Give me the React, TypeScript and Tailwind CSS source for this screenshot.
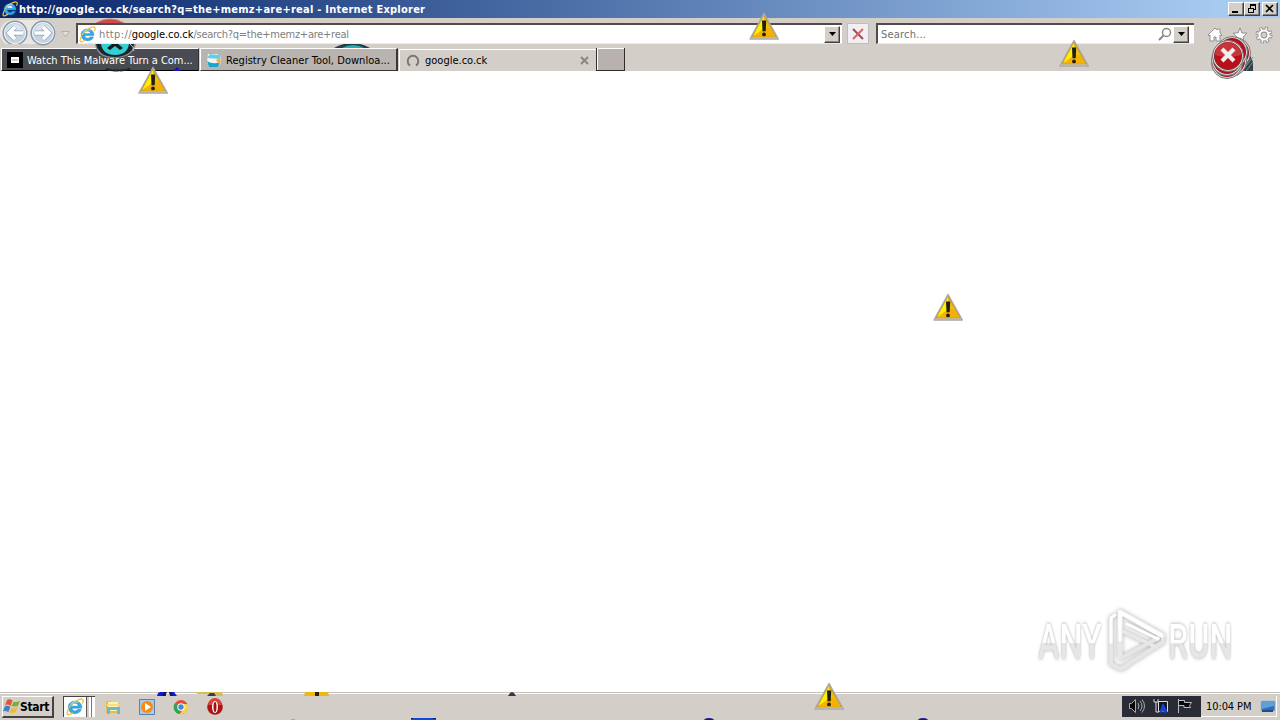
import type { ReactNode } from 'react';
import clsx from 'clsx';

type IconProps = { className?: string };

// Places of the stray warning signs on the desktop
const WARNINGS = [
  'left-[749px] top-[12px]',
  'left-[1059px] top-[39px]',
  'left-[138px] top-[66px]',
  'left-[933px] top-[293px]',
  'left-[814px] top-[682px]',
];

function IeIcon({ className }: IconProps) {
  return (
    <svg viewBox="0 0 16 16" className={className}>
      <path d="M14 9H5.300c.4 2.800 3.800 3.200 5 1.300h3.300C11.900 15.600 2 15.200 2 8.300 2 .800 14.600.800 14 9z" fill="#35a8e6" stroke="#1979bd" strokeWidth=".4" />
      <path d="M5.300 6.800h5.200C10.100 4.200 5.800 4.300 5.300 6.800z" fill="#fff" />
      <path d="M2.500 9.500C.5 13 .5 15.500 3 14.700q2-.7 3-1.700M2.500 8.500C6 3.500 12.500-.2 14.700 1.200c1 .8.400 2.500-.3 3.600" fill="none" stroke="#f2c340" strokeWidth="1.200" />
      <path d="M4 5q3-3 7-1" fill="none" stroke="#9ad9f7" strokeWidth=".8" />
    </svg>
  );
}

function WarningIcon({ className }: IconProps) {
  return (
    <svg viewBox="0 0 30 30" className={className}>
      <path d="M15 1.500 29.300 27h-28.300z" fill="#d0d0d4" stroke="#aaa8ad" strokeWidth="1.500" strokeLinejoin="round" />
      <path d="M15 3.500 27.200 25h-24.200z" fill="#eebf12" stroke="#bd9420" strokeWidth=".8" />
      <path d="M15 4 15 17 4.500 23.500z" fill="#fff000" />
      <path d="M4.500 24.500 15 16l7 0 4 8.500z" fill="#fba900" opacity=".65" />
      <path d="M13 8.500h4.200l-.5 10.800h-3.200z" fill="#201e12" />
      <circle cx="15" cy="22.400" r="1.900" fill="#201e12" />
    </svg>
  );
}

function ErrorIcons() {
  return (
    <svg viewBox="0 0 46 48" className="absolute top-[33px] left-[1208px] h-12 w-[46px]">
      <path d="M29 17 42 22l3 7v9H28z" fill="#344347" />
      <path d="m34 38 11-14M38 38l7-9" stroke="#799396" />
      {[
        [27, 20],
        [23, 28],
        [19, 30],
        [24, 19],
        [19, 27],
        [20, 23],
      ].map(([x, y]) => (
        <g key={`${x}-${y}`}>
          <circle cx={x} cy={y} r="15.500" fill="#dedede" stroke="#777" />
          <circle cx={x} cy={y} r="13.600" fill="#b80f18" stroke="#8c2229" />
        </g>
      ))}
      <path d="M7 22a13 13 0 0 1 26 0q-13 4-26 0" fill="#c8343c" />
      <path d="m14 16 12 12m0-12L14 28" stroke="#f5eeee" strokeWidth="4.200" />
    </svg>
  );
}

function TealError() {
  return (
    <svg viewBox="0 0 44 30" className="absolute top-[44px] left-[94px] h-[30px] w-11">
      <path d="M1 0c1 9 8 14 18 14 11 0 21-3 23-14z" fill="#888b90" />
      <path d="M2 0c2 9 9 13 19 13S39 8 40 0z" fill="#182629" />
      <path d="M7 0c1 7 6 11 14 11S34 7 35 0z" fill="#35cfd2" />
      <path d="m16 6 5-4 5 4 3-2-5-4h-6l-5 4z" fill="#101b1d" />
      <path d="M36 0q4 3 4 7" fill="none" stroke="#c7c0be" />
      <path d="M12 25q9 3 24 0" fill="none" stroke="#202428" strokeWidth="2" strokeDasharray="6 1" />
    </svg>
  );
}

function NavCircle({ flip }: { flip?: boolean }) {
  return (
    <svg viewBox="0 0 26 26" className={clsx('h-[26px] w-[26px]', flip && '-scale-x-100')}>
      <circle cx="13" cy="13" r="11.800" fill="#c6d3df" stroke="#8999a9" strokeWidth="1.500" />
      <circle cx="13" cy="13" r="10.500" fill="none" stroke="#edf4f9" />
      <path d="M4 13a9 9 0 0 1 18 0" fill="#dae4ed" />
      <path d="M21 13H7m6-6-6 6 6 6" stroke="#8fa2b4" strokeWidth="5" fill="none" />
      <path d="M21 13H7m6-6-6 6 6 6" stroke="#fff" strokeWidth="3.700" fill="none" />
    </svg>
  );
}

function DropButton() {
  return (
    <div className="flex h-[17px] w-4 items-center justify-center border border-t-white border-r-[#404040] border-b-[#404040] border-l-white bg-[#d4d0c8] shadow-[inset_-1px_-1px_#888]">
      <svg viewBox="0 0 7 4" className="h-1 w-[7px]"><path d="M0 0h7L3.500 4z" /></svg>
    </div>
  );
}

function WindowButton({ children }: { children: ReactNode }) {
  return (
    <div className="flex h-[14px] w-4 items-center justify-center border border-t-white border-r-[#404040] border-b-[#404040] border-l-white bg-[#d4d0c8] shadow-[inset_-1px_-1px_#808080]">
      <svg viewBox="0 0 12 12" className="h-3 w-3 shrink-0" fill="none" stroke="#000" shapeRendering="crispEdges">{children}</svg>
    </div>
  );
}

function TitleBar() {
  return (
    <div className="flex h-[18px] items-center bg-linear-to-r from-[#0a246a] to-[#a6caf0] to-95% pr-0.5 pl-0.5">
      <IeIcon className="h-4 w-4 shrink-0" />
      <span className="ml-px pt-px text-[11px] font-bold tracking-[0.24px] whitespace-nowrap text-white">
        http://google.co.ck/search?q=the+memz+are+real - Internet Explorer
      </span>
      <div className="ml-auto flex">
        <WindowButton><path d="M2 9h6" strokeWidth="2" /></WindowButton>
        <WindowButton>
          <path d="M4.500 5V1.500h5v5H8M2.500 5.500h5v4h-5zM4 2h6M2 5h6" />
        </WindowButton>
        <div className="ml-0.5">
          <WindowButton><path d="m2 2 7 7m0-7L2 9" strokeWidth="1.700" shapeRendering="auto" /></WindowButton>
        </div>
      </div>
    </div>
  );
}

function Toolbar() {
  return (
    <div className="flex h-[26px] items-start bg-[#d4cec8] pt-[5px]">
      <div className="-mt-[3px] flex gap-0.5 rounded-full bg-[#e9e7e4] pl-0.5">
        <NavCircle />
        <NavCircle flip />
      </div>
      <svg viewBox="0 0 9 6" className="mt-2 ml-[5px] h-1.5 w-[9px]"><path d="M.5.5h8l-4 5z" fill="#e4dfdc" stroke="#b5aeaa" /></svg>
      <div className="relative z-10 ml-[6px] flex h-[21px] w-[766px] items-center border-t-2 border-b border-l-2 border-t-[#514b4b] border-b-[#eee9e6] border-l-[#514b4b] bg-white pr-0.5">
        <IeIcon className="mx-px h-[17px] w-[17px]" />
        <span className="ml-0.5 pt-px text-[11px] tracking-[-0.26px] text-[#808080]">
          <span className="tracking-[0.36px]">http://</span>
          <span className="tracking-[-0.06px] text-black">google.co.ck</span>/search?q=the+memz+are+real
        </span>
        <div className="ml-auto"><DropButton /></div>
      </div>
      <div className="ml-[5px] flex h-[21px] w-[22px] items-center justify-center border border-[#bdbdc7] bg-[#f1eff2]">
        <svg viewBox="0 0 12 12" className="h-3 w-3"><path d="m1 1 10 10" stroke="#a94750" strokeWidth="2" /><path d="M11 1 1 11" stroke="#cf656b" strokeWidth="2" /></svg>
      </div>
      <div className="ml-[7px] flex h-[21px] w-[318px] items-center border-t-2 border-b border-l-2 border-t-[#514b4b] border-b-[#eee9e6] border-l-[#514b4b] bg-white pr-[5px] pl-[3px]">
        <span className="pt-px text-[11px] tracking-[0.2px] text-[#707070]">Search...</span>
        <svg viewBox="0 0 14 14" className="ml-auto h-3.5 w-3.5" fill="none" stroke="#888"><circle cx="8.500" cy="5.500" r="4" strokeWidth="1.500" /><path d="m5.500 8.500-4.500 4.500" strokeWidth="2" /></svg>
        <div className="ml-px"><DropButton /></div>
      </div>
      <div className="ml-[13px] flex items-center gap-2.5 pt-[3px]">
        <svg viewBox="0 0 16 16" className="h-4 w-4"><path d="m1 8 7-7 2 2V2h3v4l2 2-1 1-1-1v6H9v-4H7v4H3V8L2 9z" fill="#fff" stroke="#929292" /></svg>
        <svg viewBox="0 0 16 16" className="-ml-px h-4 w-4"><path d="m8 1 2 5h5l-4 4 1 5-4-3-4 3 1-5-4-4h5z" fill="#fff" stroke="#929292" /></svg>
        <svg viewBox="0 0 18 18" className="-ml-[3px] h-[18px] w-[18px]" fill="none">
          <circle cx="9" cy="9" r="6.500" stroke="#8c8c8c" strokeWidth="4" strokeDasharray="2.900 2.205" />
          <circle cx="9" cy="9" r="4.500" stroke="#8c8c8c" strokeWidth="4" />
          <circle cx="9" cy="9" r="6.500" stroke="#fff" strokeWidth="2.500" strokeDasharray="1.500 3.605" strokeDashoffset="-.7" />
          <circle cx="9" cy="9" r="4.500" stroke="#fff" strokeWidth="2.200" />
        </svg>
      </div>
    </div>
  );
}

function TabStrip() {
  return (
    <div className="flex h-[27px] items-end bg-[#d4cec8] text-[11px] whitespace-nowrap">
      <div className="ml-px flex h-[23px] w-[198px] items-center border border-t-white border-r-[#303238] border-b-black border-l-white bg-[#484b52] pl-[5px] text-white">
        <svg viewBox="0 0 16 16" className="h-4 w-4"><path d="M0 0h16v16H0z" /><path d="M4 5h8v6H4z" fill="#fff" /><path d="M5 8h6" stroke="#999" /></svg>
        <span className="relative z-20 ml-[4px] pt-0.5 tracking-[-0.04px]">Watch This Malware Turn a Com...</span>
      </div>
      <div className="ml-px flex h-[23px] w-[198px] items-center border border-t-white border-r-2 border-r-[#393636] border-b-[#393636] border-l-white bg-[#b9b4af] pl-[5px]">
        <svg viewBox="0 0 16 16" className="h-4 w-4"><path d="M2 2h12l1 8-3 5H3l-2-5z" fill="#f3f5ec" /><path d="M1 6 4 2l7 1 3-2v6z" fill="#67cce7" /><path d="M1 9q6 4 13 1l-2 5H3z" fill="#14a6cc" /><path d="m10 8 4-2 1 4-3 1z" fill="#edb147" /></svg>
        <span className="ml-1 pt-0.5 tracking-[0.04px]">Registry Cleaner Tool, Downloa...</span>
      </div>
      <div className="ml-px flex h-[22px] w-[197px] items-center border-t border-l border-white pl-[6px]">
        <svg viewBox="0 0 14 14" className="h-3.5 w-3.5"><path d="M4 11.500A5.300 5.300 0 1 1 10 11.500" fill="none" stroke="#777" strokeWidth="2" /></svg>
        <span className="ml-[5px]">google.co.ck</span>
        <svg viewBox="0 0 9 9" className="mr-[7px] ml-auto h-[9px] w-[9px]"><path d="m1 1 7 7m0-7L1 8" stroke="#8c8580" strokeWidth="2" /></svg>
      </div>
      <div className="flex h-[23px] w-[29px] border-r border-b border-l border-[#302d2d] bg-[#b9b1ad] shadow-[inset_1px_1px_#fff]" />
    </div>
  );
}

function Watermark() {
  return (
    <div className="absolute top-[605px] left-[1038px] h-[72px] w-[204px] font-['Roboto',sans-serif] text-[49px] leading-[74px] font-medium text-transparent">
      <span className="absolute left-0 origin-left scale-x-[.66] bg-linear-to-b from-white from-52% to-[#e6e6e6] to-52% bg-clip-text drop-shadow-[0_0_2px_#aaa]">ANY</span>
      <svg viewBox="0 0 60 66" className="absolute top-[3px] left-[68px] h-[66px] w-[60px] drop-shadow-[0_0_2px_#aaa]" fill="none" strokeLinecap="round" strokeLinejoin="round">
        <path d="M5 10v46l10 5 7-4" stroke="#e6e6e6" strokeWidth="4" />
        <path d="M14 49V4l43 24" stroke="#f7f7f7" strokeWidth="5" />
        <path d="M14 49V22l36 17" stroke="#e8e8e8" strokeWidth="4" />
        <path d="M16 60 57 34v-6M15 50l37-20" stroke="#e6e6e6" strokeWidth="4" />
        <path d="M5 34V10l4-3M14 32V4l42 24M21 16l31 15" stroke="#fff" strokeWidth="3" />
      </svg>
      <span className="absolute left-[130px] origin-left scale-x-[.66] bg-linear-to-b from-white from-52% to-[#e6e6e6] to-52% bg-clip-text drop-shadow-[0_0_2px_#aaa]">RUN</span>
    </div>
  );
}

function QuickLaunch() {
  return (
    <div className="ml-[9px] flex items-center">
      <div className="flex h-[21px] border-t border-l border-[#444]">
        <div className="flex w-[23px] items-center justify-center border-r border-[#555] bg-white"><IeIcon className="h-[18px] w-[18px]" /></div>
        <div className="ml-0.5 w-[3px] border-r border-[#777] bg-white" />
        <div className="w-[3px] bg-white" />
      </div>
      <svg viewBox="0 0 18 18" className="ml-[9px] h-[18px] w-[18px]"><path d="M2 3h5l1 2h7v10H2z" fill="#e1bd59" /><path d="M4 4h10v9H4z" fill="#fff3a9" /><path d="M3 9h13v7h-3v-4H6v4H3z" fill="#67bad2" /><path d="M3 7h12" stroke="#f4df83" strokeWidth="2" /></svg>
      <svg viewBox="0 0 18 18" className="ml-4 h-[18px] w-[18px]"><path d="M1.500 1.500h15v15h-15z" fill="#a9cce5" stroke="#5483af" /><circle cx="9" cy="9" r="6" fill="#f58a16" /><path d="m7 5 6 4-6 4z" fill="#fff" /></svg>
      <svg viewBox="0 0 18 18" className="ml-4 h-[18px] w-[18px]"><circle cx="9" cy="9" r="7" fill="#ed493b" /><path d="M3 5a7 7 0 0 0 4 11l3-6z" fill="#32a35b" /><path d="M9 6h6.500A7 7 0 0 1 8 16l4-7z" fill="#f8d648" /><circle cx="9" cy="9" r="3.700" fill="#fff" /><circle cx="9" cy="9" r="2.700" fill="#4489d5" /></svg>
      <svg viewBox="0 0 18 18" className="ml-4 h-[18px] w-[18px]"><circle cx="9" cy="9" r="7.800" fill="#ad1515" /><path d="M2 7a7 7 0 0 1 14 0" fill="#d5443d" /><ellipse cx="9" cy="9" rx="3" ry="6" fill="#fff" /><ellipse cx="9" cy="9" rx="1.500" ry="5" fill="#a31010" /></svg>
    </div>
  );
}

function Tray() {
  return (
    <div className="ml-auto flex h-[21px] items-center border-r border-b border-white text-[11px]">
      <div className="flex h-[21px] w-[79px] items-center gap-[6px] bg-[#292c35] pl-[6px]">
        <svg viewBox="0 0 18 16" className="h-4 w-[18px]" fill="none" stroke="#aaa"><path d="M1.500 5.500h2l4-4v13l-4-4h-2z" fill="#080808" /><path d="M10 5q2 3 0 6M12 3q4 5 0 10M14 1.500q5 6.500 0 13" /></svg>
        <svg viewBox="0 0 18 16" className="h-4 w-[18px]" fill="none" stroke="#ddd"><path d="M2 1v3h4V1M4 4v10h3M6.500 3.500h9v10h-9z" fill="#151822" /><path d="m11 6-3 8h2l1-4 1 4h3z" fill="#1744e0" stroke="#1744e0" /></svg>
        <svg viewBox="0 0 18 16" className="h-4 w-[18px]" fill="none" stroke="#bbb"><path d="M2.500 1v14M2.500 2.500h6v2h7l-2 3 1 2H8v-2H2.500z" fill="#080808" /></svg>
      </div>
      <span className="ml-[5px] w-[46px] pt-0.5 tracking-[-0.1px] whitespace-nowrap">10:04 PM</span>
      <svg viewBox="0 0 16 15" className="ml-2 h-[15px] w-4"><path d="M1 2h14v10H1z" fill="#2370bd" stroke="#aebfc9" /><path d="M2 3h12v4L2 10z" fill="#609fd8" /><path d="M2 12h11" stroke="#244e81" strokeWidth="2" /></svg>
    </div>
  );
}

// The sprite fragments that stay visible at the edges of the task bar
function TaskbarGlitches() {
  return (
    <svg viewBox="0 0 1280 30" className="pointer-events-none absolute bottom-0 left-0 h-[30px] w-[1280px]">
      <path d="m158 3 2-1h6v4h-9zm11-1h5l3 4h-7z" fill="#0717ed" />
      <path d="m164 2 3 0-2 4h-3zM169 2h2l2 4h-2z" fill="#101943" />
      <path d="M194 2h28l1 4h-12l-4-2h-9z" fill="#d8bd55" /><path d="m207 6 3-3h4l2 3z" fill="#333b62" />
      <path d="M305 2h23l1 4h-25z" fill="#ebb90b" /><path d="M315 2h4v4h-4z" fill="#29220a" />
      <path d="m508 6 2-3 2-1 2 1 2 3z" fill="#393747" />
      <path d="M411 28h25v2h-25z" fill="#1745df" /><path d="M411 28h2v1h-2zM433 28h3v1h-3z" fill="#17204c" />
      <path d="M704 30q1-2 5-2t5 2M918 30q1-2 5-2t5 2" fill="#1713a0" />
      <path d="M290 30q3-2 6 0z" fill="#aaa3a0" />
    </svg>
  );
}

function Taskbar() {
  return (
    <div className="relative flex h-7 items-center border-t border-[#c4c0bb] bg-[#d4cec8] pr-[3px] pl-0.5 shadow-[inset_0_1px_#fff]">
      <TaskbarGlitches />
      <div className="flex h-[22px] w-[52px] items-center border-t border-r-2 border-b-2 border-l border-t-white border-r-[#45413f] border-b-[#45413f] border-l-white text-[12px] font-bold">
        <svg viewBox="0 0 17 16" className="h-[18px] w-[18px] shrink-0"><path d="M4 2q3-1 5 1L7 8Q5 6 2 7z" fill="#e15631" /><path d="m10 4q3 1 6-1l-2 5q-3 1-6 0z" fill="#79ae42" /><path d="M2 8q3-1 5 1l-2 5q-2-2-5-1z" fill="#4182c4" /><path d="M8 10q3 1 6-1l-2 5q-3 1-6 0z" fill="#eabb3d" /></svg>
        <span className="-ml-px pt-0.5 tracking-[-0.35px]">Start</span>
      </div>
      <QuickLaunch />
      <Tray />
    </div>
  );
}

export default function App() {
  return (
    <div className="relative flex h-[720px] w-[1280px] flex-col overflow-hidden bg-white font-['DejaVu_Sans_Condensed','DejaVu_Sans',sans-serif] leading-4 text-black">
      <TitleBar />
      <Toolbar />
      <TabStrip />
      <div className="flex-1 bg-white" />
      <Taskbar />
      <svg viewBox="0 0 30 5" className="absolute top-[18px] left-[96px] h-[5px] w-[30px]"><path d="M0 5q7-4 14-4t14 4" fill="#d14949" stroke="#a98b88" /></svg>
      <TealError />
      <svg viewBox="0 0 36 5" className="absolute top-[43px] left-[334px] h-[5px] w-9"><path d="M0 5Q18-5 36 5z" fill="#263f44" /><path d="M8 5q11-6 22 0z" fill="#23afb4" /></svg>
      <svg viewBox="0 0 8 4" className="absolute top-[67px] left-[173px] h-1 w-2"><path d="m0 4 4-4 4 4z" fill="#1712c8" /></svg>
      <ErrorIcons />
      {WARNINGS.map((place) => (
        <WarningIcon key={place} className={clsx('absolute z-30 h-[30px] w-[30px]', place)} />
      ))}
      <Watermark />
    </div>
  );
}
